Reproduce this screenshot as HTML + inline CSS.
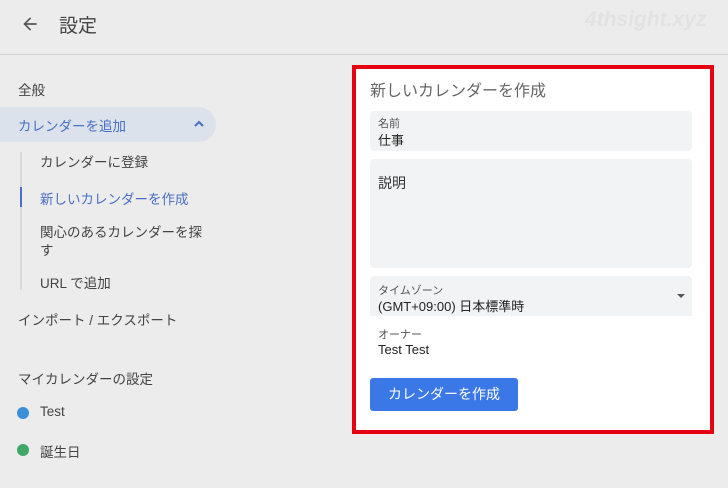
<!DOCTYPE html>
<html><head><meta charset="utf-8"><style>
body{margin:0;width:728px;height:488px;background:#ececec;font-family:"Liberation Sans","Noto Sans CJK JP",sans-serif;position:relative;overflow:hidden;color:#3c4043}
.a{position:absolute;white-space:nowrap}
.hdr{position:absolute;left:0;top:0;width:728px;height:54px;border-bottom:1px solid #cfcfcf}
.s{font-size:13.5px;color:#444}
.f{position:absolute;left:370px;width:322px;background:#f1f3f4;border-radius:4px}
</style></head><body>
<div class="hdr"></div>
<svg class="a" style="left:20px;top:14px" width="20" height="20" viewBox="0 0 24 24"><path d="M20 11H7.8l5.6-5.6L12 4l-8 8 8 8 1.4-1.4L7.8 13H20z" fill="#555"/></svg>
<div class="a" style="left:59px;top:11px;font-size:19px;color:#444">設定</div>
<div class="a" style="left:585px;top:8px;font-size:21px;font-style:italic;font-weight:bold;color:#e2e2e2">4thsight.xyz</div>

<div class="a s" style="left:18px;top:79px">全般</div>
<div class="a" style="left:0;top:107px;width:216px;height:35px;background:#dce2ec;border-radius:0 18px 18px 0"></div>
<div class="a" style="left:18px;top:115px;font-size:13.5px;color:#4a6fc6">カレンダーを追加</div>
<svg class="a" style="left:193px;top:119px" width="12" height="10" viewBox="0 0 12 10"><path d="M2 7l4-4 4 4" stroke="#4a6fc6" stroke-width="2" fill="none"/></svg>
<div class="a" style="left:20px;top:152px;width:2px;height:138px;background:#d8d8d8"></div>
<div class="a" style="left:20px;top:187px;width:2px;height:20px;background:#4a6fc6"></div>
<div class="a s" style="left:40px;top:151px">カレンダーに登録</div>
<div class="a s" style="left:40px;top:188px;color:#4a6fc6">新しいカレンダーを作成</div>
<div class="a s" style="left:40px;top:221px">関心のあるカレンダーを探</div>
<div class="a s" style="left:40px;top:239px">す</div>
<div class="a s" style="left:40px;top:272px">URL で追加</div>
<div class="a s" style="left:18px;top:309px">インポート / エクスポート</div>
<div class="a s" style="left:18px;top:368px">マイカレンダーの設定</div>
<div class="a" style="left:17px;top:407px;width:12px;height:12px;border-radius:50%;background:#3b8fd8"></div>
<div class="a s" style="left:40px;top:404px">Test</div>
<div class="a" style="left:17px;top:444px;width:12px;height:12px;border-radius:50%;background:#3fa866"></div>
<div class="a s" style="left:40px;top:441px">誕生日</div>

<div class="a" style="left:352px;top:65px;width:354px;height:361px;border:4px solid #e60012;background:#fff"></div>
<div class="a" style="left:370px;top:77px;font-size:16px;color:#666">新しいカレンダーを作成</div>
<div class="f" style="top:111px;height:40px"></div>
<div class="a" style="left:378px;top:115px;font-size:11px;color:#555">名前</div>
<div class="a" style="left:378px;top:130px;font-size:13px;color:#222">仕事</div>
<div class="f" style="top:159px;height:109px"></div>
<div class="a" style="left:378px;top:173px;font-size:14px;color:#333">説明</div>
<div class="f" style="top:276px;height:40px;border-radius:4px 4px 0 0"></div>
<div class="a" style="left:378px;top:282px;font-size:11px;color:#555">タイムゾーン</div>
<div class="a" style="left:378px;top:296px;font-size:13px;color:#222">(GMT+09:00) 日本標準時</div>
<div class="a" style="left:677px;top:294px;width:0;height:0;border-left:4px solid transparent;border-right:4px solid transparent;border-top:4px solid #555"></div>
<div class="a" style="left:378px;top:326px;font-size:11px;color:#555">オーナー</div>
<div class="a" style="left:378px;top:342px;font-size:13px;color:#222">Test Test</div>
<div class="a" style="left:370px;top:378px;width:148px;height:33px;background:#3b78e7;border-radius:3px;color:#fff;font-size:14px;text-align:center;line-height:33px">カレンダーを作成</div>
</body></html>
